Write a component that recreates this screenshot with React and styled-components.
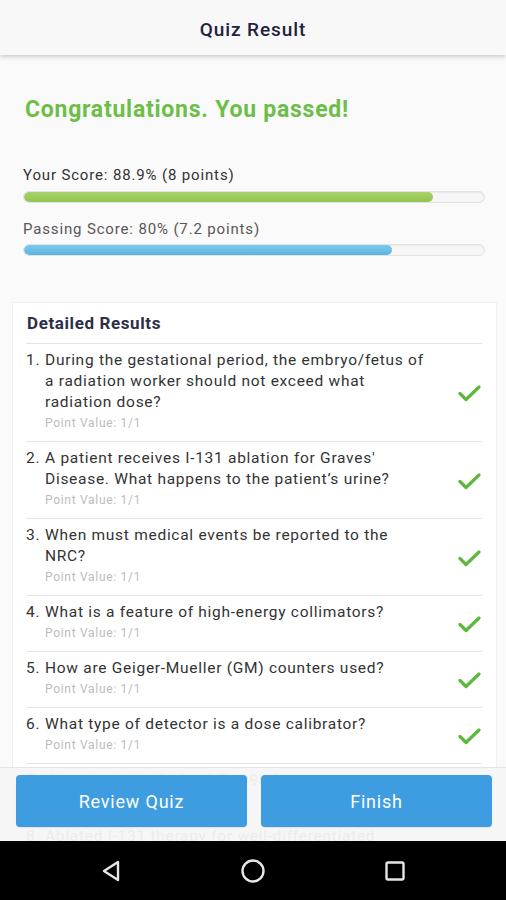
import React from "react";
import styled, { createGlobalStyle } from "styled-components";

const GlobalStyle = createGlobalStyle`
  html, body { margin: 0; padding: 0; }
  body {
    font-family: Roboto, "Noto Sans", Arial, sans-serif;
    background: #000;
    -webkit-font-smoothing: antialiased;
  }
  * { box-sizing: border-box; }
`;

const Screen = styled.div`
  width: 506px;
  height: 900px;
  display: flex;
  flex-direction: column;
  background: #fafafa;
  overflow: hidden;
`;

const Header = styled.header`
  height: 55px;
  flex: 0 0 55px;
  background: #f8f8f8;
  display: flex;
  align-items: center;
  justify-content: center;
  padding-top: 3px;
  box-shadow: 0 2px 4px rgba(0, 0, 0, 0.18);
  position: relative;
  z-index: 2;
`;

const Title = styled.h1`
  margin: 0;
  font-size: 19px;
  font-weight: 500;
  color: #1f2340;
  letter-spacing: 0.9px;
`;

const Main = styled.main`
  flex: 1;
  position: relative;
  overflow: hidden;
`;

const Summary = styled.section`
  padding: 41px 21px 46px 23px;
`;

const Congrats = styled.h2`
  margin: 0 0 41px 2px;
  font-size: 23px;
  line-height: 28px;
  font-weight: 700;
  color: #6cbe47;
  letter-spacing: 0.75px;
`;

const ScoreLabel = styled.div`
  font-size: 15px;
  line-height: 20px;
  letter-spacing: 0.85px;
  color: ${(p) => (p.$muted ? "#585858" : "#333")};
  margin-bottom: ${(p) => p.$gap}px;
`;

const Track = styled.div`
  height: 12px;
  border-radius: 6px;
  background: #f6f6f6;
  border: 1px solid #e2e2e2;
  box-shadow: inset 0 1px 2px rgba(0, 0, 0, 0.06);
  overflow: hidden;
  margin-bottom: ${(p) => p.$gap || 0}px;
`;

const Fill = styled.div`
  height: 100%;
  border-radius: 6px;
  background: ${(p) =>
    p.$tone === "green"
      ? "linear-gradient(#a9d36a, #93c351)"
      : "linear-gradient(#7ccaec, #5ab4e0)"};
`;

const Card = styled.section`
  margin: 0 9px 0 12px;
  background: #fff;
  border: 1px solid #f0f0f0;
  padding: 9px 14px 0 13px;
`;

const CardTitle = styled.h3`
  margin: 0 0 9px 1px;
  font-size: 17px;
  line-height: 22px;
  font-weight: 700;
  color: #2b2f47;
  letter-spacing: 0.6px;
`;

const Row = styled.div`
  display: grid;
  grid-template-columns: 19px 386px 1fr;
  align-items: center;
  border-top: 1px solid #e3e3e3;
  padding: 6px 0 8px;
`;

const Num = styled.div`
  align-self: start;
  font-size: 15.5px;
  line-height: 21px;
  letter-spacing: 0.7px;
  color: #333;
`;

const QText = styled.div`
  display: flex;
  flex-direction: column;
`;

const Question = styled.div`
  font-size: 15.5px;
  line-height: 21px;
  letter-spacing: 0.72px;
  color: #333;
`;

const Points = styled.div`
  font-size: 12px;
  line-height: 20px;
  letter-spacing: 0.7px;
  color: #bcbcbc;
`;

const CheckCell = styled.div`
  display: flex;
  justify-content: flex-end;
  padding-top: 4px;
  padding-right: 1px;
`;

const ActionBar = styled.div`
  position: absolute;
  left: 0;
  right: 0;
  bottom: 0;
  height: 74px;
  background: rgba(246, 246, 246, 0.95);
  border-top: 1px solid #e4e4e4;
  display: grid;
  grid-template-columns: 1fr 1fr;
  gap: 14px;
  padding: 7px 14px 14px 16px;
  z-index: 3;
`;

const Button = styled.button`
  border: none;
  border-radius: 4px;
  background: #3d9de0;
  color: #fff;
  font-family: inherit;
  font-size: 18px;
  font-weight: 400;
  letter-spacing: 0.8px;
  height: 52px;
  box-shadow: 0 1px 1px rgba(0, 0, 0, 0.08);
`;

const NavBar = styled.nav`
  flex: 0 0 59px;
  height: 59px;
  background: #000;
  display: grid;
  grid-template-columns: repeat(3, 1fr);
  align-items: center;
  justify-items: center;
  padding: 0 40px;
`;

const Check = () => (
  <svg width="23" height="17" viewBox="0 0 23 17">
    <path d="M2 8.5 L8 14.5 L21 2" fill="none" stroke="#5db83e" strokeWidth="3.2" strokeLinecap="round" strokeLinejoin="round" />
  </svg>
);

const questions = [
  "During the gestational period, the embryo/fetus of a radiation worker should not exceed what radiation dose?",
  "A patient receives I-131 ablation for Graves' Disease. What happens to the patient\u2019s urine?",
  "When must medical events be reported to the NRC?",
  "What is a feature of high-energy collimators?",
  "How are Geiger-Mueller (GM) counters used?",
  "What type of detector is a dose calibrator?",
  "What is the half-life of Tc-99m?",
  "Ablated I-131 therapy for well-differentiated thyroid cancer?",
];

export default function App() {
  return (
    <>
      <GlobalStyle />
      <Screen>
        <Header>
          <Title>Quiz Result</Title>
        </Header>
        <Main>
          <Summary>
            <Congrats>Congratulations. You passed!</Congrats>
            <ScoreLabel $gap={6}>Your Score: 88.9% (8 points)</ScoreLabel>
            <Track $gap={16}>
              <Fill $tone="green" style={{ width: "88.9%" }} />
            </Track>
            <ScoreLabel $muted $gap={5}>Passing Score: 80% (7.2 points)</ScoreLabel>
            <Track>
              <Fill $tone="blue" style={{ width: "80%" }} />
            </Track>
          </Summary>
          <Card>
            <CardTitle>Detailed Results</CardTitle>
            {questions.map((q, i) => (
              <Row key={i}>
                <Num>{i + 1}.</Num>
                <QText>
                  <Question>{q}</Question>
                  <Points>Point Value: 1/1</Points>
                </QText>
                <CheckCell>
                  <Check />
                </CheckCell>
              </Row>
            ))}
          </Card>
          <ActionBar>
            <Button>Review Quiz</Button>
            <Button>Finish</Button>
          </ActionBar>
        </Main>
        <NavBar>
          <svg width="22" height="24" viewBox="0 0 22 24">
            <path d="M18 3 L4 12 L18 21 Z" fill="none" stroke="#e6e6e6" strokeWidth="2.4" strokeLinejoin="round" />
          </svg>
          <svg width="26" height="26" viewBox="0 0 26 26">
            <circle cx="13" cy="13" r="10.5" fill="none" stroke="#e6e6e6" strokeWidth="2.4" />
          </svg>
          <svg width="24" height="24" viewBox="0 0 24 24">
            <rect x="3.5" y="3.5" width="17" height="17" rx="1.5" fill="none" stroke="#e6e6e6" strokeWidth="2.4" />
          </svg>
        </NavBar>
      </Screen>
    </>
  );
}
